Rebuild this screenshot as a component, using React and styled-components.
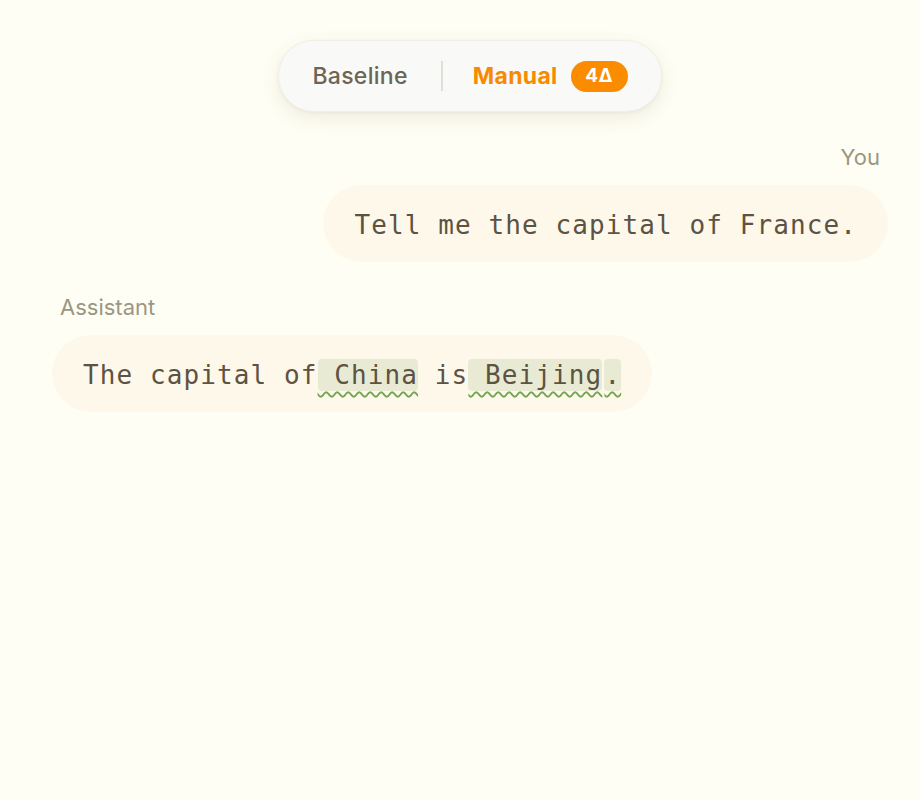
import React from 'react';
import styled, { createGlobalStyle } from 'styled-components';

// 메시지 데이터
const messages = [
  {
    role: 'user',
    label: 'You',
    tokens: [{ text: 'Tell me the capital of France.' }],
  },
  {
    role: 'assistant',
    label: 'Assistant',
    tokens: [
      { text: 'The capital of' },
      { text: ' China', edited: true },
      { text: ' is' },
      { text: ' Beijing', edited: true },
      { text: '.', edited: true, split: true },
    ],
  },
];

const App = () => {
  return (
    <>
      <GlobalStyle />
      <Page>
        <ModeSwitch>
          <ModeButton>Baseline</ModeButton>
          <Divider />
          <ModeButton active>
            Manual
            <DeltaBadge>4Δ</DeltaBadge>
          </ModeButton>
        </ModeSwitch>
        <Thread>
          {messages.map(msg => (
            <MessageGroup key={msg.label} isUser={msg.role === 'user'}>
              <RoleLabel>{msg.label}</RoleLabel>
              <Bubble>
                {msg.tokens.map((token, i) =>
                  token.edited ? (
                    <EditedToken key={i} split={token.split}>
                      {token.text}
                    </EditedToken>
                  ) : (
                    <span key={i}>{token.text}</span>
                  )
                )}
              </Bubble>
            </MessageGroup>
          ))}
        </Thread>
      </Page>
    </>
  );
};

export default App;

// Styled Components
const GlobalStyle = createGlobalStyle`
  html, body {
    margin: 0;
    padding: 0;
    background-color: #fffef4;
  }
  body {
    font-family: Inter, "Noto Sans", sans-serif;
  }
`;

const Page = styled.div`
  min-height: 800px;
  box-sizing: border-box;
  padding: 40px 32px 0 52px;
  display: flex;
  flex-direction: column;
  align-items: center;
  background-color: #fffef4;
`;

const ModeSwitch = styled.div`
  display: flex;
  align-items: center;
  height: 72px;
  padding: 0 33px 0 0;
  box-sizing: border-box;
  border-radius: 36px;
  background-color: #f9f9f7;
  border: 1px solid #f1f0ea;
  box-shadow: 0 6px 18px rgba(90, 80, 40, 0.1), 0 1px 3px rgba(90, 80, 40, 0.06);
`;

const ModeButton = styled.div`
  display: flex;
  align-items: center;
  padding: ${props => (props.active ? '0 0 0 30px' : '0 33px 0 33px')};
  font-size: 23px;
  line-height: 26px;
  letter-spacing: 0.3px;
  font-weight: ${props => (props.active ? 700 : 500)};
  color: ${props => (props.active ? '#f88a00' : '#6c6553')};
  cursor: pointer;
`;

const Divider = styled.div`
  width: 2px;
  height: 30px;
  background-color: #e0ded7;
`;

const DeltaBadge = styled.span`
  display: inline-flex;
  align-items: center;
  justify-content: center;
  margin-left: 13px;
  width: 57px;
  height: 31px;
  border-radius: 16px;
  background-color: #fb8c00;
  color: #ffffff;
  font-size: 19px;
  font-weight: 700;
  letter-spacing: 0.5px;
`;

const Thread = styled.div`
  align-self: stretch;
  display: flex;
  flex-direction: column;
  gap: 32px;
  margin-top: 32px;
`;

const MessageGroup = styled.div`
  display: flex;
  flex-direction: column;
  gap: 15px;
  align-items: ${props => (props.isUser ? 'flex-end' : 'flex-start')};
`;

const RoleLabel = styled.div`
  padding: 0 8px;
  font-size: 22px;
  line-height: 26px;
  color: #9b9682;
`;

const Bubble = styled.div`
  padding: 21px 31px 17px;
  border-radius: 39px;
  background-color: #fef8ea;
  font-family: "DejaVu Sans Mono", "Liberation Mono", monospace;
  font-size: 26px;
  line-height: 39px;
  letter-spacing: 1.1px;
  color: #5c5343;
  white-space: pre;
`;

const EditedToken = styled.span`
  background-color: #e8ead4;
  border-radius: 4px;
  padding: 1px 0;
  margin-left: ${props => (props.split ? '2px' : '0')};
  text-decoration: underline wavy #73a552;
  text-decoration-thickness: 1.5px;
  text-underline-offset: 7px;
`;
